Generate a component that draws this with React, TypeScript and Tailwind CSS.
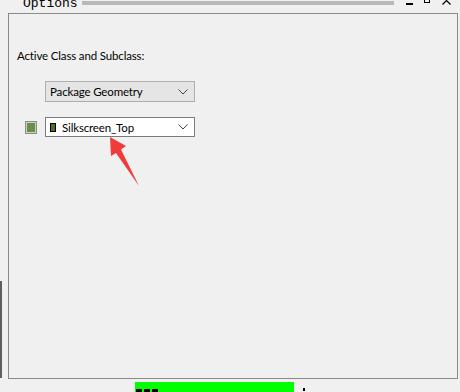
// Options panel – class / subclass picker

const ui = "font-['Lato','Liberation_Sans',sans-serif] tracking-[-0.15px]";

function Chevron() {
  return (
    <svg width="10" height="6" viewBox="0 0 10 6" className="shrink-0">
      <path d="M0.5 0.5 L5 5 L9.5 0.5" fill="none" stroke="#444" strokeWidth="1" />
    </svg>
  );
}

function Combo({ label, disabled, swatch }: { label: string; disabled?: boolean; swatch?: boolean }) {
  return (
    <div
      className={
        disabled
          ? 'flex h-[21px] w-[150px] items-center border border-[#adadad] bg-[#e5e5e5] pl-[4px] pr-[6px]'
          : 'flex h-[20px] w-[150px] items-center border border-[#7a7a7a] bg-white pl-[4px] pr-[6px]'
      }
    >
      {swatch && <div className="mr-[6px] h-[9px] w-[6px] border border-black bg-[#4f6e2c]" />}
      <span className={`flex-1 text-[11.5px] leading-[15px] text-black ${ui}`}>{label}</span>
      <Chevron />
    </div>
  );
}

export default function App() {
  return (
    <div className="relative h-[392px] w-[460px] overflow-hidden bg-[#f0f0f0]">
      {/* title strip */}
      <div className="flex h-[13px] items-start">
        <span className="ml-[23px] -mt-[4px] font-['Liberation_Mono',monospace] text-[13px] leading-[15px] text-black">
          Options
        </span>
        <div className="ml-[4px] mt-[1px] h-[4px] w-[312px] bg-[#b9b9b9]" />
        <div className="ml-[12px] mt-[3px] h-[2px] w-[7px] bg-black" />
        <svg width="9" height="6" viewBox="0 0 9 6" className="ml-[11px]">
          <rect x="0.5" y="-2.5" width="5" height="5" fill="none" stroke="#000" />
          <rect x="3.5" y="-5.5" width="5" height="5" fill="none" stroke="#000" />
        </svg>
        <svg width="9" height="6" viewBox="0 0 9 6" className="ml-[9px]">
          <path d="M0.5 4.5 L4.5 0.5 L8.5 4.5" fill="none" stroke="#000" strokeWidth="1.2" />
        </svg>
      </div>

      {/* group box */}
      <div className="ml-[8px] h-[366px] w-[450px] border border-[#8a8a8a] pl-[8px] pt-[34px]">
        <div className={`text-[11.5px] leading-[15px] text-black ${ui}`}>Active Class and Subclass:</div>
        <div className="ml-[28px] mt-[18px]">
          <Combo label="Package Geometry" disabled />
        </div>
        <div className="mt-[15px] flex items-center">
          <div className="ml-[8px] h-[13px] w-[12px] border border-[#8c8c8c] bg-[#6b8e49] shadow-[inset_0_0_0_1px_#c8d4bc]" />
          <div className="ml-[8px]">
            <Combo label="Silkscreen_Top" swatch />
          </div>
        </div>
      </div>

      {/* left edge of neighbouring window */}
      <div className="absolute left-0 top-[281px] h-[97px] w-[2px] bg-[#606060]" />

      {/* status strip */}
      <div className="ml-[135px] mt-[3px] flex items-start">
        <div className="h-[10px] w-[159px] bg-[#00ff00] pl-[1px] pt-[7px]">
          <div className="flex gap-[2px]">
            <div className="h-[3px] w-[6px] bg-black" />
            <div className="h-[3px] w-[6px] bg-black" />
            <div className="h-[3px] w-[6px] bg-black" />
          </div>
        </div>
        <div className="ml-[9px] mt-[6px] h-[3px] w-[2px] bg-black" />
      </div>

      {/* annotation arrow */}
      <svg className="absolute left-0 top-0" width="460" height="392">
        <polygon
          points="110,137 126,146 121,149.5 139,186 116,153 111,156"
          fill="#f03b3b"
        />
      </svg>
    </div>
  );
}
